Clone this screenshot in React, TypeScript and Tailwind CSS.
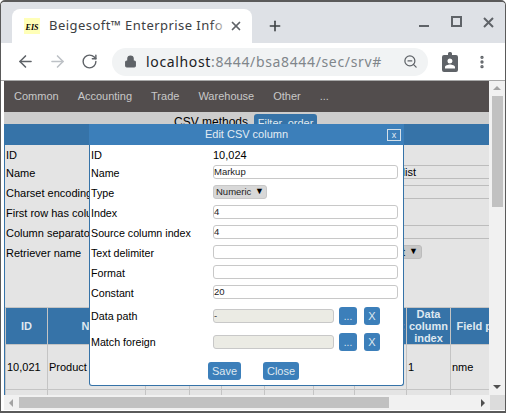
import React from "react";
import { ArrowLeft, ArrowRight, RotateCw, Lock, ZoomOut, X, Plus, MoreVertical } from "lucide-react";

const navItems = ["Common", "Accounting", "Trade", "Warehouse", "Other", "..."];

const columns = [
  { name: "ID", w: "w-[42px]", cell: "10,021" },
  { name: "Name", w: "w-[98px]", cell: "Product" },
  { name: "", w: "w-[44px]", cell: "" },
  { name: "", w: "w-[32px]", cell: "" },
  { name: "", w: "w-[43px]", cell: "" },
  { name: "", w: "w-[49px]", cell: "" },
  { name: "", w: "w-[41px]", cell: "" },
  { name: ":", w: "w-[52px]", cell: "" },
  { name: "Data column index", w: "w-[44px]", cell: "1" },
  { name: "Field path", w: "w-[64px]", cell: "nme" },
];

function BackRow({ label, box }: { label: string; box?: React.ReactNode }) {
  return (
    <div className="flex items-center h-[20px] whitespace-nowrap">
      <div className="w-[84px] shrink-0 overflow-hidden pl-px">{label}</div>
      {box}
    </div>
  );
}

function BackInput({ text }: { text?: string }) {
  return (
    <div className="ml-[41px] mb-[2px] w-[400px] h-[14px] shrink-0 border border-[#bcbcbc] rounded-[2px]">
      <div className="w-[285px] text-right leading-[12px]">{text}</div>
    </div>
  );
}

function Field({ label, value }: { label: string; value?: string }) {
  return (
    <div className="flex items-center h-[14px] mb-[6px]">
      <div className="w-[122px] shrink-0 pt-[2px] text-[10.7px] text-black">{label}</div>
      <input
        readOnly
        value={value || ""}
        className="w-[183px] h-[12px] box-content border border-[#c8c8c8] rounded-[3px] bg-white text-[9.5px] text-[#222] outline-none"
      />
    </div>
  );
}

function PickField({ label, value, mb }: { label: string; value?: string; mb: string }) {
  return (
    <div className={"flex items-center h-[18px] " + mb}>
      <div className="w-[122px] shrink-0 text-[10.7px] text-black">{label}</div>
      <input
        readOnly
        value={value || ""}
        className="w-[119px] h-[12px] box-content border border-[#c8c8c8] rounded-[3px] bg-[#ebebe4] text-[9.5px] text-[#333] outline-none"
      />
      <button className="ml-[5px] w-[18px] h-[18px] rounded-[3px] bg-[#3c7fba] text-[#dfe8f0] text-[10px]">...</button>
      <button className="ml-[7px] w-[16px] h-[18px] rounded-[3px] bg-[#3c7fba] text-[#dfe8f0] text-[11px]">X</button>
    </div>
  );
}

export default function App() {
  return (
    <div className="w-[508px] h-[414px] overflow-hidden bg-white font-['Liberation_Sans',sans-serif]">
      <div className="w-[506px] h-[413px] flex flex-col bg-white border-x border-t-2 border-b-2 border-[#5a5a5a] rounded-t-[5px] overflow-hidden">
        {/* tab strip */}
        <div className="h-[41px] shrink-0 bg-[#dee1e6] flex items-end pl-[11px]">
          <div className="w-[240px] h-[34px] bg-white rounded-t-[8px] flex items-center pl-[12px] pr-[9px]">
            <div className="w-[16px] h-[16px] shrink-0 bg-[#ffffb8] flex items-end justify-center text-[8px] leading-[12px] italic font-bold font-['Liberation_Serif',serif] text-black">EIS</div>
            <div className="relative ml-[9px] flex-1 overflow-hidden whitespace-nowrap text-[13px] tracking-[0.45px] text-[#3c4043] font-['Noto_Sans',sans-serif]">
              Beigesoft™ Enterprise Info
              <div className="absolute right-0 top-0 w-[18px] h-full bg-gradient-to-r from-transparent to-white" />
            </div>
            <X size={14} strokeWidth={3} className="text-[#5f6368] shrink-0" />
          </div>
          <Plus size={16} strokeWidth={2.4} className="text-[#3c4043] ml-[15px] mb-[9px]" />
          <svg width="76" height="12" viewBox="0 0 76 12" className="ml-auto mr-[10px] self-start mt-[14px] text-[#5f6368]" fill="none" stroke="currentColor" strokeWidth="2">
            <path d="M0 10h10" />
            <rect x="33" y="1" width="9" height="9" />
            <path d="M65 2l9 9M74 2l-9 9" />
          </svg>
        </div>
        {/* toolbar */}
        <div className="h-[38px] shrink-0 bg-white border-b border-[#a8a8a8] flex items-center pl-[15px]">
          <ArrowLeft size={19} className="text-[#5f6368] shrink-0" />
          <ArrowRight size={19} className="text-[#bdc1c6] ml-[13px] shrink-0" />
          <RotateCw size={17} className="text-[#5f6368] ml-[14px] shrink-0" />
          <div className="ml-[14px] w-[316px] h-[28px] shrink-0 rounded-full bg-[#f1f3f4] flex items-center pl-[12px] pr-[10px]">
            <Lock size={13} fill="#5f6368" className="text-[#5f6368] shrink-0" />
            <div className="ml-[9px] text-[14px] tracking-[0.65px] whitespace-nowrap font-['Noto_Sans',sans-serif] text-[#202124]">
              localhost<span className="text-[#80868b]">:8444/bsa8444/sec/srv#</span>
            </div>
            <ZoomOut size={15} className="ml-auto text-[#5f6368] shrink-0" />
          </div>
          <svg width="16" height="20" viewBox="0 0 16 20" className="ml-[14px] shrink-0">
            <path fill="#5f6368" fillRule="evenodd" d="M2 3h4V1.5A1.5 1.5 0 0 1 7.5 0h1A1.5 1.5 0 0 1 10 1.5V3h4a2 2 0 0 1 2 2v13a2 2 0 0 1-2 2H2a2 2 0 0 1-2-2V5a2 2 0 0 1 2-2zM8 6.5a2.5 2.5 0 1 0 0 5 2.5 2.5 0 0 0 0-5zM3 16.5h10v-1.5c0-1.5-3-2.5-5-2.5s-5 1-5 2.5z" />
          </svg>
          <MoreVertical size={16} strokeWidth={3} className="text-[#5f6368] ml-[16px] shrink-0" />
        </div>
        {/* page */}
        <div className="relative flex-1 min-h-0 flex flex-col pl-[3px] pb-px">
          <div className="flex-1 min-h-0 flex">
            <div className="w-[485px] shrink-0 overflow-hidden bg-[#cdcdcd] flex flex-col">
              <div className="h-[31px] shrink-0 bg-[#524d4d] flex items-center pl-[10px] gap-[19px] text-[11px] text-[#c8c8c8]">
                {navItems.map((n) => (
                  <span key={n}>{n}</span>
                ))}
              </div>
              <div className="h-[12px] shrink-0 overflow-hidden flex items-start pl-[170px] text-black">
                <span className="text-[12px] leading-[14px] mt-[3px] whitespace-nowrap">CSV methods</span>
                <span className="ml-[6px] w-[63px] h-[14px] mt-[2px] rounded-t-[3px] bg-[#3673a8] text-[#dfe8f0] text-[11px] leading-[14px] pt-[2px] text-center whitespace-nowrap">Filter, order</span>
              </div>
              <div className="flex-1 min-h-0 overflow-hidden border-l border-[#3673a8] bg-[#e4e4e4] flex flex-col">
                <div className="h-[21px] shrink-0 bg-[#3673a8]" />
                <div className="text-[11px] text-black">
                  <div className="h-[18px] pt-[2px] pl-px flex items-center">ID</div>
                  <BackRow label="Name" box={<BackInput text="Price list" />} />
                  <BackRow label="Charset encoding" box={<BackInput />} />
                  <BackRow label="First row has column names" />
                  <BackRow label="Column separator" box={<BackInput />} />
                  <BackRow
                    label="Retriever name"
                    box={
                      <div className="ml-[41px] mb-[2px] w-[292px] h-[14px] shrink-0 rounded-[3px] bg-[#c8c8c8] border border-[#bcbcbc] flex items-center justify-end pr-[3px] gap-[4px] text-[11px]">
                        t<span className="text-[9px] text-black">▼</span>
                      </div>
                    }
                  />
                </div>
                <div className="h-[44px] shrink-0" />
                <table className="table-fixed border-collapse text-[11px] w-[509px]">
                  <thead>
                    <tr className="h-[37px] bg-[#3673a8] text-[#dfe8f0]">
                      {columns.map((c, i) => (
                        <th key={i} className={"border border-[#c4c4c4] font-bold leading-[12px] p-0 " + c.w + (c.name === ":" ? " text-right pr-px" : "") + (i === 9 ? " whitespace-nowrap" : "")}>
                          {c.name}
                        </th>
                      ))}
                    </tr>
                  </thead>
                  <tbody>
                    <tr className="h-[45px] text-black">
                      {columns.map((c, i) => (
                        <td key={i} className="border border-[#c4c4c4] px-px whitespace-nowrap">
                          {c.cell}
                        </td>
                      ))}
                    </tr>
                    <tr className="h-[20px]">
                      {columns.map((c, i) => (
                        <td key={i} className="border border-[#c4c4c4]" />
                      ))}
                    </tr>
                  </tbody>
                </table>
              </div>
            </div>
            {/* vertical scrollbar */}
            <div className="flex-1 bg-[#f1f1f1] flex flex-col items-center pt-[5px]">
              <div className="w-0 h-0 border-x-[4px] border-x-transparent border-b-[4px] border-b-[#a3a3a3]" />
              <div className="w-[11px] h-[111px] mt-[6px] bg-[#c1c1c1]" />
              <div className="mt-auto mb-[6px] w-0 h-0 border-x-[4px] border-x-transparent border-t-[4px] border-t-[#505050]" />
            </div>
          </div>
          {/* horizontal scrollbar */}
          <div className="h-[15px] shrink-0 bg-[#f1f1f1] flex items-center">
            <div className="ml-[5px] w-0 h-0 border-y-[4px] border-y-transparent border-r-[4px] border-r-[#a3a3a3]" />
            <div className="ml-[6px] w-[370px] h-[11px] bg-[#c1c1c1]" />
            <div className="ml-[92px] w-0 h-0 border-y-[4px] border-y-transparent border-l-[4px] border-l-[#505050]" />
            <div className="ml-auto w-[15px] h-full bg-[#dcdcdc]" />
          </div>
          {/* dialog */}
          <div className="absolute left-[88px] top-[43px] w-[315px] h-[262px] bg-white border-x border-b border-[#3673a8] rounded-b-[3px] flex flex-col">
            <div className="h-[21px] -mx-px shrink-0 bg-[#3c7fba] relative flex items-center justify-center text-[11px] text-[#e4ecf3]">
              Edit CSV column
              <div className="absolute right-[3px] top-[5px] w-[14px] h-[12px] border border-[#d4dfe8] flex items-center justify-center text-[9px] leading-none">x</div>
            </div>
            <div className="flex flex-col pl-px">
              <div className="flex items-center h-[20px] text-[11px] text-black">
                <div className="w-[122px]">ID</div>
                <div>10,024</div>
              </div>
              <Field label="Name" value="Markup" />
              <div className="flex items-center h-[14px] mb-[6px]">
                <div className="w-[122px] shrink-0 pt-[2px] text-[10.7px] text-black">Type</div>
                <div className="w-[54px] h-[14px] rounded-[3px] bg-[#d8d8d8] border border-[#c8c8c8] flex items-center justify-between px-[2px] text-[9.5px] text-[#222]">
                  Numeric<span className="text-[9px] text-black">▼</span>
                </div>
              </div>
              <Field label="Index" value="4" />
              <Field label="Source column index" value="4" />
              <Field label="Text delimiter" />
              <Field label="Format" />
              <Field label="Constant" value="20" />
              <div className="h-[2px]" />
              <PickField label="Data path" value="-" mb="mb-[8px]" />
              <PickField label="Match foreign" mb="mb-[11px]" />
              <div className="flex gap-[22px] pl-[117px]">
                <button className="w-[33px] h-[18px] rounded-[3px] bg-[#3c7fba] text-[#dfe8f0] text-[11px]">Save</button>
                <button className="w-[36px] h-[18px] rounded-[3px] bg-[#3c7fba] text-[#dfe8f0] text-[11px]">Close</button>
              </div>
            </div>
          </div>
        </div>
      </div>
    </div>
  );
}
